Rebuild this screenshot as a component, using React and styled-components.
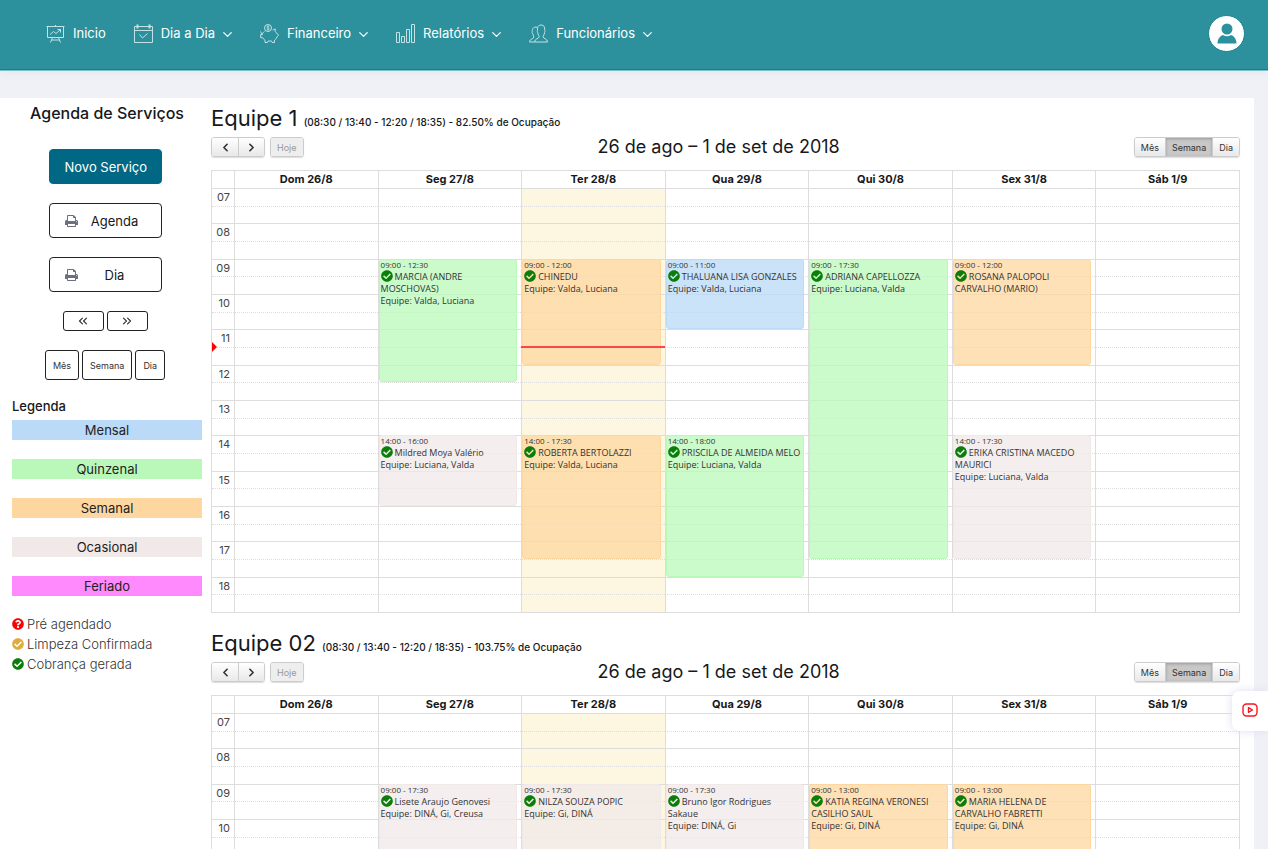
import React from 'react';
import styled, { createGlobalStyle } from 'styled-components'
import { FaCheckCircle, FaQuestionCircle } from 'react-icons/fa'
import { ChevronDown, ChevronLeft, ChevronRight, ChevronsLeft, ChevronsRight } from 'lucide-react'

const GlobalStyle = createGlobalStyle`
    * {
        box-sizing:border-box;
    }
    body {
        margin:0;
        background:#f0f1f7;
        color:#16181b;
        font-family:Inter, "Liberation Sans", sans-serif;
        font-size:13px;
    }
    button {
        font-family:inherit;
        cursor:pointer;
    }
    a {
        color:inherit;
        text-decoration:none;
    }
`

const Header = styled.header`
    display:flex;
    align-items:center;
    justify-content:space-between;
    height:71px;
    padding:0 23px 4px 46px;
    background:#2c919d;
    border-bottom:1px solid #7fc0c8;
    box-shadow:inset 0 -1px 0 #167f8d, 0 2px 8px #e4e5ef;
`

const Nav = styled.nav`
    display:flex;
    gap:28px;
`

const NavItem = styled.a`
    display:flex;
    align-items:center;
    gap:8px;
    color:#fff;
    font-size:13px;
    line-height:20px;
`

const NavIcon = styled.svg`
    width:19px;
    height:19px;
    fill:none;
    stroke:#c3e2e5;
    stroke-width:1;
`

const DropArrow = styled(ChevronDown)`
    width:15px;
    height:15px;
    margin:2px -3px 0;
    stroke-width:2;
`

const Avatar = styled.button`
    display:flex;
    align-items:center;
    justify-content:center;
    width:37px;
    height:37px;
    padding:0;
    border:1px solid #15808f;
    border-radius:50%;
    background:#fff;
`

const Page = styled.main`
    display:flex;
    align-items:flex-start;
    gap:9px;
    margin:27px 14px 0 0;
    padding:6px 14px 20px 12px;
    background:#fff;
`

const Sidebar = styled.aside`
    display:flex;
    flex-direction:column;
    flex:none;
    width:190px;
`

const SideTitle = styled.h1`
    margin:0 0 27px;
    font-size:16px;
    font-weight:500;
    line-height:18px;
    text-align:center;
`

const Actions = styled.div`
    display:flex;
    flex-direction:column;
    align-items:center;
    gap:19px;
    padding-right:4px;
`

const ActionButton = styled.button`
    display:flex;
    align-items:center;
    gap:6px;
    width:113px;
    height:35px;
    padding:0 15px;
    border:1px solid ${props => props.$primary ? '#006884' : '#222'};
    border-radius:4px;
    background:${props => props.$primary ? '#006884' : '#fff'};
    color:${props => props.$primary ? '#fff' : '#16181b'};
    font-size:13px;

    span {
        flex:1;
        text-align:center;
        white-space:nowrap;
    }
`

const ButtonRow = styled.div`
    display:flex;
    justify-content:center;
    gap:3px;
`

const SmallButton = styled.button`
    display:flex;
    align-items:center;
    justify-content:center;
    height:${props => props.$tall ? '30px' : '20px'};
    width:${props => props.$tall ? 'auto' : '41px'};
    padding:0 7px;
    border:1px solid #222;
    border-radius:3px;
    background:#fff;
    color:#333;
    font-size:9px;
`

const LegendTitle = styled.h2`
    margin:16px 0 4px;
    font-size:13px;
    font-weight:500;
    line-height:20px;
`

const LegendList = styled.ul`
    display:flex;
    flex-direction:column;
    gap:19px;
    margin:0 0 18px;
    padding:0;
    list-style:none;
`

const LegendItem = styled.li`
    background:${props => props.$color};
    color:#222;
    line-height:20px;
    text-align:center;
`

const StatusList = styled.ul`
    margin:0;
    padding:0;
    list-style:none;
`

const StatusItem = styled.li`
    display:flex;
    align-items:center;
    gap:3px;
    color:#333;
    font-weight:300;
    line-height:20px;

    svg {
        color:${props => props.$color};
    }
`

const Teams = styled.div`
    display:flex;
    flex-direction:column;
    flex:1;
    gap:16px;
    min-width:0;
`

const TeamTitle = styled.h2`
    margin:0;
    font-size:22px;
    font-weight:400;
    line-height:28px;

    small {
        font-size:10px;
        font-weight:500;
    }
`

const Toolbar = styled.div`
    display:flex;
    align-items:center;
    justify-content:space-between;
    height:22px;
    margin-bottom:12px;
`

const ToolbarSide = styled.div`
    display:flex;
    gap:5px;
`

const Period = styled.h3`
    margin:0;
    font-size:18px;
    font-weight:400;
    line-height:20px;
`

const ButtonGroup = styled.div`
    display:flex;
    border:1px solid #ccc;
    border-radius:3px;
    box-shadow:0 1px 1px #ddd;
    overflow:hidden;
`

const ToolButton = styled.button`
    display:flex;
    align-items:center;
    justify-content:center;
    min-width:26px;
    height:18px;
    padding:0 6px;
    border:0;
    background:${props => props.$active ? '#c8c8c8' : 'linear-gradient(#fff, #e8e8e8)'};
    box-shadow:${props => props.$active ? 'inset 0 1px 3px #999' : 'none'};
    color:#333;
    font-size:9px;

    & + & {
        border-left:1px solid #ccc;
    }
    &:disabled {
        background:#eee;
        color:#999;
    }
`

const Calendar = styled.div`
    position:relative;
`

const Grid = styled.table`
    display:block;
    border:1px solid #ddd;
    border-top:0;

    thead {
        display:block;
        border-top:1px solid #ddd;
    }
    tbody {
        display:grid;
        grid-template-rows:repeat(24, 1fr);
        height:424px;
    }
    tr {
        display:grid;
        grid-template-columns:22px repeat(7, 1fr);
    }
`

const DayHead = styled.th`
    height:17px;
    padding:0;
    border-left:1px solid #ddd;
    font-size:11px;
    font-weight:700;
    line-height:17px;
    text-align:center;

    &:first-child {
        border-left:0;
    }
`

const HourCell = styled.th`
    padding:0 4px 0 0;
    border-top:1px ${props => props.$half ? 'dotted' : 'solid'} #ddd;
    color:#444;
    font-size:11px;
    font-weight:400;
    line-height:16px;
    text-align:right;
`

const Slot = styled.td`
    padding:0;
    border-top:1px ${props => props.$half ? 'dotted' : 'solid'} #ddd;
    border-left:1px solid #ddd;
    background:${props => props.$today ? '#fdf7e1' : 'transparent'};
`

const Events = styled.div`
    position:absolute;
    top:18px;
    right:1px;
    left:23px;
    display:grid;
    grid-template-columns:repeat(7, 1fr);
    grid-template-rows:repeat(24, 1fr);
    height:424px;
`

const Event = styled.a`
    grid-column:${props => props.$day};
    grid-row:${props => props.$from} / ${props => props.$to};
    min-width:0;
    margin:0 4px 0 1px;
    padding:0 1px;
    border:1px solid ${props => props.$color};
    border-radius:3px;
    background:${props => props.$color}c0;
    color:#333;
    font-family:"Open Sans", sans-serif;
    font-size:9px;
    line-height:12px;
    overflow:hidden;

    time {
        display:block;
        font-size:8px;
        line-height:10px;
    }
    svg {
        margin-right:2px;
        color:#0a7d0a;
        vertical-align:-2px;
    }
`

const NowLine = styled.div`
    position:absolute;
    left:calc(100% * 2 / 7);
    width:calc(100% / 7);
    height:2px;
    background:#fa4848;
`

const NowArrow = styled.div`
    position:absolute;
    left:-22px;
    border:5px solid transparent;
    border-right-width:0;
    border-left-color:#f00;
    transform:translateY(-4px);
`

const VideoTab = styled.button`
    position:fixed;
    right:0;
    top:691px;
    display:flex;
    align-items:center;
    justify-content:center;
    width:36px;
    height:40px;
    padding:0 0 3px;
    border:0;
    border-radius:8px 0 0 8px;
    background:#fff;
    box-shadow:0 0 10px #dcdcf2;
`

const colors = {
    mensal: '#badaf7',
    quinzenal: '#baf8ba',
    semanal: '#fed7a0',
    ocasional: '#f1e8e8',
    feriado: '#fe8afe',
}

const legend = [
    ['Mensal', colors.mensal],
    ['Quinzenal', colors.quinzenal],
    ['Semanal', colors.semanal],
    ['Ocasional', colors.ocasional],
    ['Feriado', colors.feriado],
]

const days = ['Dom 26/8', 'Seg 27/8', 'Ter 28/8', 'Qua 29/8', 'Qui 30/8', 'Sex 31/8', 'Sáb 1/9']
const today = 2
const firstHour = 7
const slots = Array.from({ length: 24 }, (_, i) => i)

const teams = [
    {
        name: 'Equipe 1',
        info: '(08:30 / 13:40 - 12:20 / 18:35) - 82.50% de Ocupação',
        now: '11:28',
        events: [
            { day: 1, start: '09:00', end: '12:30', type: 'quinzenal', name: 'MARCIA (ANDRE MOSCHOVAS)', team: 'Valda, Luciana' },
            { day: 1, start: '14:00', end: '16:00', type: 'ocasional', name: 'Mildred Moya Valério', team: 'Luciana, Valda' },
            { day: 2, start: '09:00', end: '12:00', type: 'semanal', name: 'CHINEDU', team: 'Valda, Luciana' },
            { day: 2, start: '14:00', end: '17:30', type: 'semanal', name: 'ROBERTA BERTOLAZZI', team: 'Valda, Luciana' },
            { day: 3, start: '09:00', end: '11:00', type: 'mensal', name: 'THALUANA LISA GONZALES', team: 'Valda, Luciana' },
            { day: 3, start: '14:00', end: '18:00', type: 'quinzenal', name: 'PRISCILA DE ALMEIDA MELO', team: 'Luciana, Valda' },
            { day: 4, start: '09:00', end: '17:30', type: 'quinzenal', name: 'ADRIANA CAPELLOZZA', team: 'Luciana, Valda' },
            { day: 5, start: '09:00', end: '12:00', type: 'semanal', name: 'ROSANA PALOPOLI CARVALHO (MARIO)' },
            { day: 5, start: '14:00', end: '17:30', type: 'ocasional', name: 'ERIKA CRISTINA MACEDO MAURICI', team: 'Luciana, Valda' },
        ],
    },
    {
        name: 'Equipe 02',
        info: '(08:30 / 13:40 - 12:20 / 18:35) - 103.75% de Ocupação',
        events: [
            { day: 1, start: '09:00', end: '17:30', type: 'ocasional', name: 'Lisete Araujo Genovesi', team: 'DINÁ, Gi, Creusa' },
            { day: 2, start: '09:00', end: '17:30', type: 'ocasional', name: 'NILZA SOUZA POPIC', team: 'Gi, DINÁ' },
            { day: 3, start: '09:00', end: '17:30', type: 'ocasional', name: 'Bruno Igor Rodrigues Sakaue', team: 'DINÁ, Gi' },
            { day: 4, start: '09:00', end: '13:00', type: 'semanal', name: 'KATIA REGINA VERONESI CASILHO SAUL', team: 'Gi, DINÁ' },
            { day: 5, start: '09:00', end: '13:00', type: 'semanal', name: 'MARIA HELENA DE CARVALHO FABRETTI', team: 'Gi, DINÁ' },
        ],
    },
]

// half-hour slots since the first hour of the grid
const toSlot = (time) => {
    const [h, m] = time.split(':').map(Number)
    return (h - firstHour) * 2 + m / 30
}

const BoardIcon = () => (
    <NavIcon viewBox="0 0 19 19">
        <path d="M.5 2.5h18M1.5 2.5v11h16v-11M9.5 1v1.5M6.5 13.5l-2 5M12.5 13.5l2 5M5.5 16h8M4 10.5l3.5-3 2.5 2L14.5 5.500M11.5 5.500h3v3" />
    </NavIcon>
)

const CalendarIcon = () => (
    <NavIcon viewBox="0 0 19 19">
        <path d="M.5 2.500h18v16h-18zM.5 6.500h18M5.500 10.500l3 3.500 5-4.500" />
        <path d="M3.500 0.500v4M15.500 0.500v4" strokeWidth="2" />
    </NavIcon>
)

const PiggyIcon = () => (
    <NavIcon viewBox="0 0 19 19">
        <circle cx="8" cy="4" r="3.500" />
        <path d="M9.300 2.600c-.8-.7-2.400-.4-2.400.5 0 1.200 2.500.6 2.500 1.900 0 .9-1.800 1.100-2.700.3M8 1.500v5" strokeWidth=".8" />
        <path d="M4.500 7.500c-1.300.8-2 1.800-2.200 3H.7v3.200h2c.6 1.300 1.500 2 2.300 2.600v2.200h2.500l.7-1.500h3.300l.7 1.500h2.300v-2.300c1.300-.9 2-1.900 2.400-3.200.6-1.300 1.600-1 1.600-2.200-.2-1-1.500-.5-1.800-1.300-.3-.8-1-1.600-1.700-2.200l.4-2.300c-1.300 0-2.300.5-2.900 1.300M2.300 10.500L.5 7.500" />
    </NavIcon>
)

const BarsIcon = () => (
    <NavIcon viewBox="0 0 19 19">
        <path d="M.5 8.500h3v10h-3zM5.500 12.500h3v6h-3zM10.500 5.500h3v13h-3zM15.500.5h3v18h-3z" />
    </NavIcon>
)

const PeopleIcon = () => (
    <NavIcon viewBox="0 0 19 19">
        <path d="M5.500 18h13c0-3.500-4.500-3.300-4.500-5.200 0-1 1.500-2 1.500-4.300 1-1.500.3-2 .2-2.300C16 3 15 1 12 1S8.300 3.300 8.500 6.200c-.3.500-.5 1.300.2 2.300.2 2.300 1.500 3.200 1.500 4.300 0 1.900-4.700 1.900-4.700 5.200z" />
        <path d="M8 3.300C5 2.500 3 4.300 3.300 7.500c-.6 1 0 2 .5 2.200.2 1.500 1 2.300 1 3.500C4.800 15 .5 14.800.5 18h5" />
    </NavIcon>
)

const PrinterIcon = () => (
    <svg width="13" height="14" viewBox="0 0 1664 1792" fill="#6b6f80" aria-hidden="true">
        <path d="M384 1536h896v-256h-896v256zM384 896h896v-384h-160q-40 0-68-28t-28-68v-160h-640v640zM1536 960q0-26-19-45t-45-19-45 19-19 45 19 45 45 19 45-19 19-45zM1664 960v416q0 13-9.500 22.500t-22.500 9.500h-224v160q0 40-28 68t-68 28h-960q-40 0-68-28t-28-68v-160h-224q-13 0-22.500-9.500t-9.500-22.500v-416q0-79 56.500-135.500t135.500-56.500h64v-544q0-40 28-68t68-28h672q40 0 88 20t76 48l152 152q28 28 48 76t20 88v256h64q79 0 135.500 56.500t56.500 135.500z" />
    </svg>
)

const menu = [
    { label: 'Inicio', icon: BoardIcon },
    { label: 'Dia a Dia', icon: CalendarIcon, drop: true },
    { label: 'Financeiro', icon: PiggyIcon, drop: true },
    { label: 'Relatórios', icon: BarsIcon, drop: true },
    { label: 'Funcionários', icon: PeopleIcon, drop: true },
]

const TeamCalendar = ({ team }) => (
    <section>
        <TeamTitle>{team.name} <small>{team.info}</small></TeamTitle>
        <Toolbar>
            <ToolbarSide>
                <ButtonGroup>
                    <ToolButton aria-label="Anterior"><ChevronLeft size={13} strokeWidth={3} /></ToolButton>
                    <ToolButton aria-label="Próximo"><ChevronRight size={13} strokeWidth={3} /></ToolButton>
                </ButtonGroup>
                <ButtonGroup>
                    <ToolButton disabled>Hoje</ToolButton>
                </ButtonGroup>
            </ToolbarSide>
            <Period>26 de ago – 1 de set de 2018</Period>
            <ButtonGroup>
                <ToolButton>Mês</ToolButton>
                <ToolButton $active>Semana</ToolButton>
                <ToolButton>Dia</ToolButton>
            </ButtonGroup>
        </Toolbar>
        <Calendar>
            <Grid>
                <thead>
                    <tr>
                        <DayHead as="td" />
                        {days.map(day => <DayHead key={day} scope="col">{day}</DayHead>)}
                    </tr>
                </thead>
                <tbody>
                    {slots.map(slot => (
                        <tr key={slot}>
                            <HourCell scope="row" $half={slot % 2 === 1}>
                                {slot % 2 === 0 && String(firstHour + slot / 2).padStart(2, '0')}
                            </HourCell>
                            {days.map((day, i) => (
                                <Slot key={day} $half={slot % 2 === 1} $today={i === today} />
                            ))}
                        </tr>
                    ))}
                </tbody>
            </Grid>
            <Events>
                {team.events.map(event => (
                    <Event
                        key={event.name}
                        href="#"
                        $day={event.day + 1}
                        $from={toSlot(event.start) + 1}
                        $to={toSlot(event.end) + 1}
                        $color={colors[event.type]}
                    >
                        <time>{event.start} - {event.end}</time>
                        <FaCheckCircle size={12} />
                        {event.name}
                        {event.team && <div>Equipe: {event.team}</div>}
                    </Event>
                ))}
                {team.now && (
                    <>
                        <NowLine style={{ top: `${toSlot(team.now) / 24 * 100}%` }} />
                        <NowArrow style={{ top: `${toSlot(team.now) / 24 * 100}%` }} />
                    </>
                )}
            </Events>
        </Calendar>
    </section>
)

const App = () => {
    return (
        <>
            <GlobalStyle />
            <Header>
                <Nav>
                    {menu.map(({ label, icon: Icon, drop }) => (
                        <NavItem key={label} href="#">
                            <Icon />
                            {label}
                            {drop && <DropArrow />}
                        </NavItem>
                    ))}
                </Nav>
                <Avatar aria-label="Conta">
                    <svg width="20" height="21" viewBox="0 0 20 21" fill="#2c919d">
                        <circle cx="10" cy="6" r="5.500" />
                        <path d="M.5 20.500c0-4.500 2.500-7.500 5.500-8.500 2.500 1.800 5.500 1.800 8 0 3 1 5.500 4 5.500 8.500z" />
                    </svg>
                </Avatar>
            </Header>
            <Page>
                <Sidebar>
                    <SideTitle>Agenda de Serviços</SideTitle>
                    <Actions>
                        <ActionButton $primary><span>Novo Serviço</span></ActionButton>
                        <ActionButton><PrinterIcon /><span>Agenda</span></ActionButton>
                        <ActionButton><PrinterIcon /><span>Dia</span></ActionButton>
                        <ButtonRow>
                            <SmallButton aria-label="Voltar"><ChevronsLeft size={14} strokeWidth={2} /></SmallButton>
                            <SmallButton aria-label="Avançar"><ChevronsRight size={14} strokeWidth={2} /></SmallButton>
                        </ButtonRow>
                        <ButtonRow>
                            <SmallButton $tall>Mês</SmallButton>
                            <SmallButton $tall>Semana</SmallButton>
                            <SmallButton $tall>Dia</SmallButton>
                        </ButtonRow>
                    </Actions>
                    <LegendTitle>Legenda</LegendTitle>
                    <LegendList>
                        {legend.map(([label, color]) => (
                            <LegendItem key={label} $color={color}>{label}</LegendItem>
                        ))}
                    </LegendList>
                    <StatusList>
                        <StatusItem $color="#fb0007"><FaQuestionCircle size={12} />Pré agendado</StatusItem>
                        <StatusItem $color="#dfab3a"><FaCheckCircle size={12} />Limpeza Confirmada</StatusItem>
                        <StatusItem $color="#0a7d0a"><FaCheckCircle size={12} />Cobrança gerada</StatusItem>
                    </StatusList>
                </Sidebar>
                <Teams>
                    {teams.map(team => <TeamCalendar key={team.name} team={team} />)}
                </Teams>
            </Page>
            <VideoTab aria-label="Vídeo">
                <svg width="16" height="14" viewBox="0 0 16 14" fill="none" stroke="#fb1420" strokeWidth="1.400" strokeLinejoin="round">
                    <rect x="1" y="1" width="14" height="12" rx="3.500" />
                    <path d="M6.500 4.700v4.600l4-2.300z" />
                </svg>
            </VideoTab>
        </>
    )
}

export default App
